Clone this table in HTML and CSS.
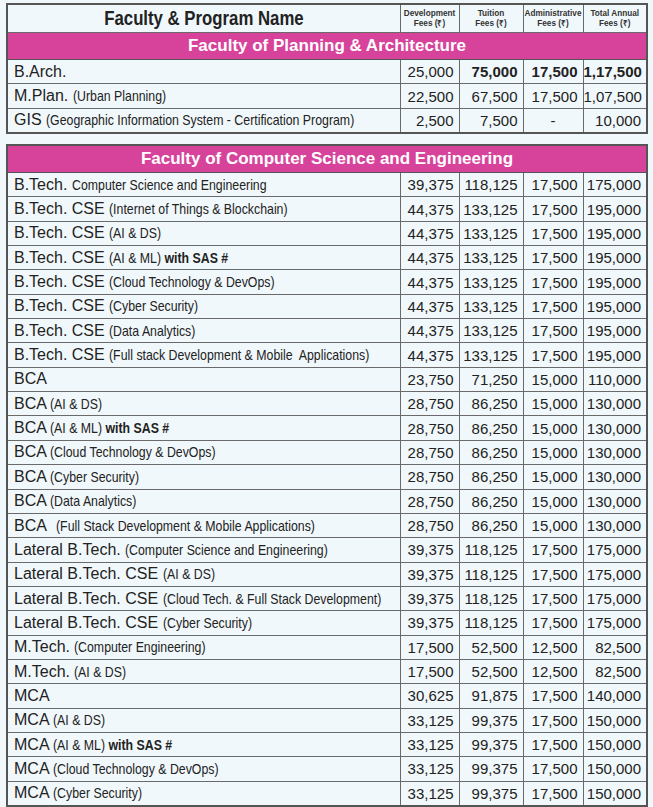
FILE: index.html
```html
<!DOCTYPE html>
<html>
<head>
<meta charset="utf-8">
<link rel="stylesheet" href="styles.css">
</head>
<body>
<table class="fees first">
  <colgroup><col class="c-name"><col class="c-dev"><col class="c-tui"><col class="c-adm"><col class="c-tot"></colgroup>
  <tr class="head">
    <th class="h-name"><span class="h-title">Faculty &amp; Program Name</span></th>
    <th class="h-small">Development<br>Fees (₹)</th>
    <th class="h-small">Tuition<br>Fees (₹)</th>
    <th class="h-small">Administrative<br>Fees (₹)</th>
    <th class="h-small">Total Annual<br>Fees (₹)</th>
  </tr>
  <tr class="faculty"><td colspan="5">Faculty of Planning &amp; Architecture</td></tr>
  <tr><td class="name">B.Arch.</td><td class="num">25,000</td><td class="num b">75,000</td><td class="num b">17,500</td><td class="num b">1,17,500</td></tr>
  <tr><td class="name">M.Plan. <span class="sub">(Urban Planning)</span></td><td class="num">22,500</td><td class="num">67,500</td><td class="num">17,500</td><td class="num">1,07,500</td></tr>
  <tr><td class="name">GIS <span class="sub">(Geographic Information System - Certification Program)</span></td><td class="num">2,500</td><td class="num">7,500</td><td class="num dash">-</td><td class="num">10,000</td></tr>
</table>

<table class="fees second">
  <colgroup><col class="c-name"><col class="c-dev"><col class="c-tui"><col class="c-adm"><col class="c-tot"></colgroup>
  <tr class="faculty"><td colspan="5">Faculty of Computer Science and Engineering</td></tr>
  <tr><td class="name">B.Tech. <span class="sub">Computer Science and Engineering</span></td><td class="num">39,375</td><td class="num">118,125</td><td class="num">17,500</td><td class="num">175,000</td></tr>
  <tr><td class="name">B.Tech. CSE <span class="sub">(Internet of Things &amp; Blockchain)</span></td><td class="num">44,375</td><td class="num">133,125</td><td class="num">17,500</td><td class="num">195,000</td></tr>
  <tr><td class="name">B.Tech. CSE <span class="sub">(AI &amp; DS)</span></td><td class="num">44,375</td><td class="num">133,125</td><td class="num">17,500</td><td class="num">195,000</td></tr>
  <tr><td class="name">B.Tech. CSE <span class="sub">(AI &amp; ML) <b>with SAS #</b></span></td><td class="num">44,375</td><td class="num">133,125</td><td class="num">17,500</td><td class="num">195,000</td></tr>
  <tr><td class="name">B.Tech. CSE <span class="sub">(Cloud Technology &amp; DevOps)</span></td><td class="num">44,375</td><td class="num">133,125</td><td class="num">17,500</td><td class="num">195,000</td></tr>
  <tr><td class="name">B.Tech. CSE <span class="sub">(Cyber Security)</span></td><td class="num">44,375</td><td class="num">133,125</td><td class="num">17,500</td><td class="num">195,000</td></tr>
  <tr><td class="name">B.Tech. CSE <span class="sub">(Data Analytics)</span></td><td class="num">44,375</td><td class="num">133,125</td><td class="num">17,500</td><td class="num">195,000</td></tr>
  <tr><td class="name">B.Tech. CSE <span class="sub">(Full stack Development &amp; Mobile&nbsp; Applications)</span></td><td class="num">44,375</td><td class="num">133,125</td><td class="num">17,500</td><td class="num">195,000</td></tr>
  <tr><td class="name">BCA</td><td class="num">23,750</td><td class="num">71,250</td><td class="num">15,000</td><td class="num">110,000</td></tr>
  <tr><td class="name">BCA <span class="sub">(AI &amp; DS)</span></td><td class="num">28,750</td><td class="num">86,250</td><td class="num">15,000</td><td class="num">130,000</td></tr>
  <tr><td class="name">BCA <span class="sub">(AI &amp; ML) <b>with SAS #</b></span></td><td class="num">28,750</td><td class="num">86,250</td><td class="num">15,000</td><td class="num">130,000</td></tr>
  <tr><td class="name">BCA <span class="sub">(Cloud Technology &amp; DevOps)</span></td><td class="num">28,750</td><td class="num">86,250</td><td class="num">15,000</td><td class="num">130,000</td></tr>
  <tr><td class="name">BCA <span class="sub">(Cyber Security)</span></td><td class="num">28,750</td><td class="num">86,250</td><td class="num">15,000</td><td class="num">130,000</td></tr>
  <tr><td class="name">BCA <span class="sub">(Data Analytics)</span></td><td class="num">28,750</td><td class="num">86,250</td><td class="num">15,000</td><td class="num">130,000</td></tr>
  <tr><td class="name">BCA&nbsp; <span class="sub">(Full Stack Development &amp; Mobile Applications)</span></td><td class="num">28,750</td><td class="num">86,250</td><td class="num">15,000</td><td class="num">130,000</td></tr>
  <tr><td class="name">Lateral B.Tech. <span class="sub">(Computer Science and Engineering)</span></td><td class="num">39,375</td><td class="num">118,125</td><td class="num">17,500</td><td class="num">175,000</td></tr>
  <tr><td class="name">Lateral B.Tech. CSE <span class="sub">(AI &amp; DS)</span></td><td class="num">39,375</td><td class="num">118,125</td><td class="num">17,500</td><td class="num">175,000</td></tr>
  <tr><td class="name">Lateral B.Tech. CSE <span class="sub">(Cloud Tech. &amp; Full Stack Development)</span></td><td class="num">39,375</td><td class="num">118,125</td><td class="num">17,500</td><td class="num">175,000</td></tr>
  <tr><td class="name">Lateral B.Tech. CSE <span class="sub">(Cyber Security)</span></td><td class="num">39,375</td><td class="num">118,125</td><td class="num">17,500</td><td class="num">175,000</td></tr>
  <tr><td class="name">M.Tech. <span class="sub">(Computer Engineering)</span></td><td class="num">17,500</td><td class="num">52,500</td><td class="num">12,500</td><td class="num">82,500</td></tr>
  <tr><td class="name">M.Tech. <span class="sub">(AI &amp; DS)</span></td><td class="num">17,500</td><td class="num">52,500</td><td class="num">12,500</td><td class="num">82,500</td></tr>
  <tr><td class="name">MCA</td><td class="num">30,625</td><td class="num">91,875</td><td class="num">17,500</td><td class="num">140,000</td></tr>
  <tr><td class="name">MCA <span class="sub">(AI &amp; DS)</span></td><td class="num">33,125</td><td class="num">99,375</td><td class="num">17,500</td><td class="num">150,000</td></tr>
  <tr><td class="name">MCA <span class="sub">(AI &amp; ML) <b>with SAS #</b></span></td><td class="num">33,125</td><td class="num">99,375</td><td class="num">17,500</td><td class="num">150,000</td></tr>
  <tr><td class="name">MCA <span class="sub">(Cloud Technology &amp; DevOps)</span></td><td class="num">33,125</td><td class="num">99,375</td><td class="num">17,500</td><td class="num">150,000</td></tr>
  <tr><td class="name">MCA <span class="sub">(Cyber Security)</span></td><td class="num">33,125</td><td class="num">99,375</td><td class="num">17,500</td><td class="num">150,000</td></tr>
</table>
</body>
</html>
```

FILE: styles.css
```css
html, body {
  margin: 0;
  background: #f1f8fb;
}
body {
  padding-top: 3px;
  font-family: "Liberation Sans", Arial, sans-serif;
  color: #222;
}
.fees {
  border-collapse: collapse;
  table-layout: fixed;
  width: 641px;
  margin-left: 6px;
  border: 2px solid #555;
  background: #f1f8fb;
}
.second {
  margin-top: 10px;
}
.c-name { width: 393px; }
.c-dev { width: 59px; }
.c-tui { width: 64px; }
.c-adm { width: 60px; }
.c-tot { width: 64px; }

.fees td, .fees th {
  border: 1px solid #6a6a6a;
  padding: 0;
  vertical-align: middle;
  white-space: nowrap;
  overflow: hidden;
}
.head th {
  height: 27px;
}
.h-name {
  font-weight: bold;
}
.h-title {
  display: inline-block;
  font-size: 19.5px;
  transform: scaleX(0.86);
}
.h-small {
  font-size: 8.2px;
  font-weight: bold;
  line-height: 10px;
  color: #333;
}
.faculty td {
  height: 26px;
  background: #d7439b;
  color: #fff;
  font-weight: bold;
  font-size: 17px;
  text-align: center;
  border-color: #555;
}
.fees tr td.name,
.fees tr td.num {
  height: 23.35px;
}
.name {
  font-size: 16px;
  padding-left: 6px !important;
  color: #222;
}
.sub {
  display: inline-block;
  font-size: 14.5px;
  transform: scaleX(0.85);
  transform-origin: left center;
}
.sub b {
  font-weight: bold;
}
.num {
  font-size: 15px;
  text-align: right;
  padding-right: 5px !important;
}
.num.b {
  font-weight: bold;
}
.num.dash {
  text-align: center;
  padding-right: 0 !important;
}
```
